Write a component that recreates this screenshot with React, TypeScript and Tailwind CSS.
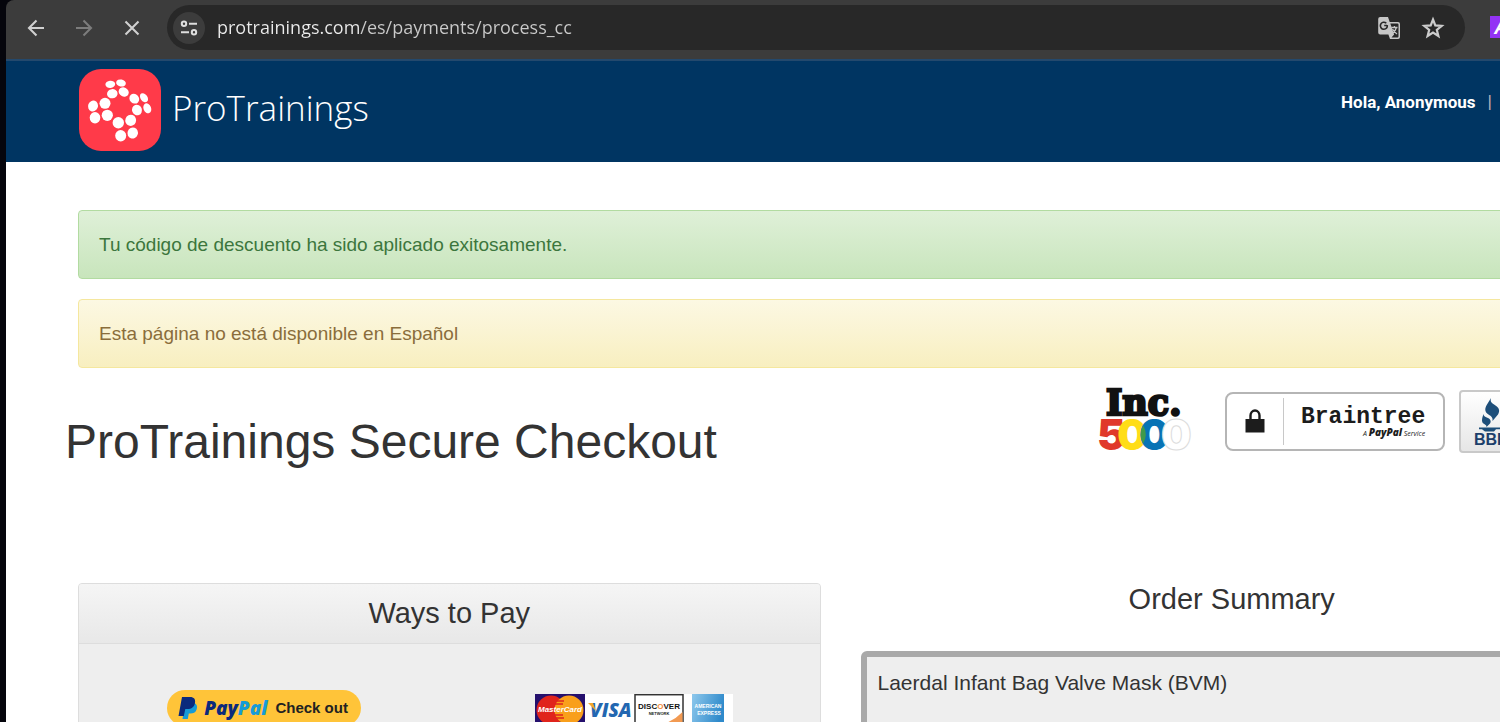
import React from "react";

const logoDots: [number, number, number, number, number][] = [
  [31.3, 15.3, 4.9, 3.6, -5],
  [42, 14, 4.9, 3.5, 12],
  [33.3, 24.7, 5.3, 4.6, -8],
  [44.7, 23, 5.2, 4.5, 25],
  [55.3, 29.7, 5.2, 4.6, 45],
  [65, 28.7, 3.5, 5, -35],
  [58, 41, 4.9, 5.4, -20],
  [68.3, 39.3, 3.8, 5.1, -22],
  [14, 37, 4.9, 5.5, 20],
  [26, 34.3, 5.5, 5.5, 0],
  [16, 48.7, 5.3, 5.7, 0],
  [28.3, 46.3, 5.6, 5.6, 0],
  [39.3, 53.7, 5.7, 5.7, 0],
  [51.7, 51.3, 5.4, 5.6, 20],
  [41.7, 66.7, 5.5, 5.7, 0],
  [53.7, 64, 5.2, 5.6, 20],
];

function BrandMark() {
  return (
    <svg viewBox="0 0 82 82" className="size-[82px] shrink-0" aria-hidden="true">
      <rect width="82" height="82" rx="22" fill="#ff3a49" />
      {logoDots.map(([x, y, rx, ry, a]) => (
        <ellipse key={`${x}-${y}`} cx={x} cy={y} rx={rx} ry={ry} fill="#fff" transform={`rotate(${a} ${x} ${y})`} />
      ))}
    </svg>
  );
}

function Toolbar() {
  return (
    <div className="flex h-[59px] items-start overflow-hidden rounded-tl-lg bg-[#3c3c3c] pt-[5px]">
      <div className="flex h-[45px] shrink-0 items-center gap-6 pr-[23px] pl-[18px]">
        <button type="button" aria-label="Back" className="text-[#d0d0d0]">
          <svg viewBox="0 0 24 24" className="size-6" fill="none" stroke="currentColor" strokeWidth="2.100">
            <path d="M20 12H5.500M12.500 4.500 5 12l7.500 7.500" />
          </svg>
        </button>
        <button type="button" aria-label="Forward" className="text-[#7c7c7c]">
          <svg viewBox="0 0 24 24" className="size-6" fill="none" stroke="currentColor" strokeWidth="2.100">
            <path d="M4 12h14.500M11.500 4.500l7.500 7.500-7.500 7.500" />
          </svg>
        </button>
        <button type="button" aria-label="Stop" className="text-[#d0d0d0]">
          <svg viewBox="0 0 24 24" className="size-6" fill="none" stroke="currentColor" strokeWidth="2.100">
            <path d="M5.500 5.500l13 13M18.500 5.500l-13 13" />
          </svg>
        </button>
      </div>
      <div className="flex h-[45px] min-w-0 flex-1 items-center rounded-full bg-[#282828] pr-5 pl-[6px]">
        <button type="button" aria-label="Site information" className="flex size-8 shrink-0 items-center justify-center rounded-full bg-[#3c3c3c]">
          <svg viewBox="0 0 18 18" className="size-[18px]" fill="none" stroke="#dedede" strokeWidth="2">
            <circle cx="4" cy="4.800" r="2.200" />
            <path d="M9 4.800h8M1 13.200h8" />
            <circle cx="14" cy="13.200" r="2.200" />
          </svg>
        </button>
        <input
          aria-label="Address"
          defaultValue="protrainings.com/es/payments/process_cc"
          className="ml-3 h-8 min-w-0 flex-1 bg-[linear-gradient(90deg,#ececec_143px,#cbcbcb_143px)] bg-clip-text pb-[2px] font-['Open_Sans','Noto_Sans',sans-serif] text-[18px] text-transparent outline-none"
        />
        <div className="flex items-center gap-5">
          <button type="button" aria-label="Translate">
            <svg viewBox="0 0 24 24" className="size-6">
              <path d="M3.200 1H11l1.700 5H21a2 2 0 0 1 2 2v13a2 2 0 0 1-2 2h-8l-1.600-4.500H3.200a2 2 0 0 1-2-2V3a2 2 0 0 1 2-2z" fill="#c6c6c6" />
              <path d="M13.300 7.500H20.500a1 1 0 0 1 1 1v12a1 1 0 0 1-1 1h-6l2.600-3z" fill="#282828" />
              <path d="M10 9.500H7.200M10.300 9.200c.3 2.200-1 4-3.400 4a3.500 3.500 0 1 1 2.400-6" fill="none" stroke="#282828" strokeWidth="1.600" />
              <path d="M14.200 11.500h6.300M17.400 10v1.500M19.400 11.500c-.6 2.500-2.200 4.500-4 6M15.500 13c1 2 2.500 3.800 4.500 5" fill="none" stroke="#c6c6c6" strokeWidth="1.300" />
            </svg>
          </button>
          <button type="button" aria-label="Bookmark this page">
            <svg viewBox="0 0 24 24" className="size-6" fill="none" stroke="#cccccc" strokeWidth="2.200">
              <path d="M12 3.500l2.300 5.900 6.400.4-4.900 4 1.600 6.200L12 16.600 6.600 20l1.600-6.200-4.900-4 6.400-.4z" />
            </svg>
          </button>
        </div>
      </div>
      <button type="button" aria-label="Extension" className="mt-[11px] ml-[25px] h-[22px] w-[10px] shrink-0 overflow-hidden bg-[#9333f5] pl-1 text-left font-['Liberation_Sans',sans-serif] text-xl leading-[22px] font-bold text-white italic">
        A
      </button>
    </div>
  );
}

function IncBadge() {
  return (
    <svg viewBox="0 0 94 66" className="h-[66px] w-[94px] shrink-0 overflow-visible" role="img" aria-label="Inc. 5000">
      <text x="7" y="27" fontSize="35" fill="#111" stroke="#111" strokeWidth="2.600" fontFamily="'DejaVu Serif', serif" fontWeight="bold">Inc.</text>
      <text y="62" fontSize="43" fontFamily="Inter, sans-serif" fontWeight="900">
        <tspan x="-2" fill="#e0392b">5</tspan>
        <tspan x="18" fill="#ffdd17">0</tspan>
        <tspan x="40" fill="#0873b5">0</tspan>
        <tspan x="62" fill="#fff" stroke="#dcdcdc">0</tspan>
      </text>
      <path d="M44 37q5.500 9.500 0 19-5-9.500 0-19z" fill="#3f9a4a" />
    </svg>
  );
}

function Braintree() {
  return (
    <a href="#braintree" className="flex h-[59px] w-[220px] shrink-0 items-center rounded-lg border-2 border-[#b5b5b5] bg-white">
      <span className="flex h-[47px] w-[57px] items-center justify-center border-r border-[#c8c8c8]">
        <svg viewBox="0 0 20 24" className="h-6 w-5" aria-hidden="true">
          <path d="M5.500 11V6.500a4.500 5 0 0 1 9 0V11" fill="none" stroke="#1c1c1c" strokeWidth="2.400" />
          <rect x="0.500" y="10" width="19" height="13.500" fill="#1c1c1c" />
        </svg>
      </span>
      <span className="ml-[17px] flex flex-col items-end pt-1 text-[#1c1c1c]">
        <span className="font-['Liberation_Mono',monospace] text-[23px] leading-5 font-bold">Braintree</span>
        <span className="font-['Open_Sans',sans-serif] text-[7px] leading-[10px] italic">
          A <b className="text-[10px] font-extrabold">PayPal</b> Service
        </span>
      </span>
    </a>
  );
}

function Bbb() {
  return (
    <a href="#bbb" className="flex h-[63px] w-[120px] shrink-0 flex-col rounded border-2 border-[#c9c9c9] bg-linear-to-b from-white to-[#e6e6e6] pt-[6px] pl-[13px]">
      <svg viewBox="0 0 32 34" className="h-[34px] w-8 shrink-0" aria-hidden="true" fill="#1d4e79">
        <path d="M17 0c-1 4 .5 5 4.500 7.500 4 2.500 4.500 5.500 2.500 9L18.500 23c.5-3.500-1-4.500-4-6.500-4-2.500-4-6-1.500-10z" />
        <path d="M9.500 16c0 2.500 2 3 4.500 4s3.500 3.500 2 5.500L12.500 29c.3-2-1.500-2.500-3-3.500-2-1.500-2-4 0-9.500z" />
        <path d="M5 29.500h22v1.800H5zM8 31.300h14l-2 2.200h-9z" />
      </svg>
      <span className="font-['Liberation_Sans',sans-serif] text-base leading-[15px] font-bold text-[#1d3f6b]">BBB</span>
    </a>
  );
}

function PayPalButton() {
  return (
    <button type="button" className="flex h-[36px] w-[194px] items-center rounded-full bg-[#ffc439] pl-[11px]">
      <svg viewBox="0 0 20 24" className="h-6 w-5" aria-hidden="true">
        <path d="M7 7h9c3 1 3.600 3.600 2.600 6.500-1 3-3.300 4-6.300 4h-1.500L9.800 23H4.500z" fill="#169bd7" />
        <path d="M4 1h8c4 0 5.700 2.300 5 6-.9 4-3.500 6-7.500 6H7.300L5.800 20H.500z" fill="#0b2a7c" />
      </svg>
      <span className="ml-[6px] font-['Open_Sans',sans-serif] text-[19px] leading-6 font-extrabold text-[#0b2a7c] italic">
        Pay<span className="text-[#169bd7]">Pal</span>
      </span>
      <span className="ml-2 font-['Liberation_Sans',sans-serif] text-[15px] leading-5 font-bold text-[#222]">Check out</span>
    </button>
  );
}

function AcceptedCards() {
  return (
    <svg viewBox="0 0 198 32" className="mt-1 h-8 w-[198px]" role="img" aria-label="Accepted cards">
      <rect width="198" height="32" fill="#fff" />
      <rect width="50" height="32" fill="#25106d" />
      <circle cx="16" cy="16" r="14.500" fill="#e0241c" />
      <circle cx="34" cy="16" r="14.500" fill="#f99f1b" />
      <path d="M21 7h8M20 10h8M20 21h8M21 24h8" stroke="#e0241c" strokeWidth="1.500" />
      <text x="25" y="18" fontSize="8" textAnchor="middle" fill="#fff" fontFamily="'Liberation Sans', sans-serif" fontWeight="bold" fontStyle="italic">MasterCard</text>
      <text x="55" y="23" fontSize="19" fill="#2367b1" fontFamily="'Open Sans', sans-serif" fontWeight="800" fontStyle="italic">VISA</text>
      <path d="M53 9h5l3 8z" fill="#f3a62c" />
      <rect x="100" y="0.700" width="48" height="34" fill="#fff" stroke="#333" strokeWidth="1.500" />
      <path d="M147.500 18v14H122q16-4 25.500-14z" fill="#f29a52" />
      <text x="124" y="15" fontSize="8" textAnchor="middle" fill="#111" fontFamily="'Liberation Sans', sans-serif" fontWeight="bold">
        DISC<tspan fill="#f58a3c">O</tspan>VER
      </text>
      <text x="124" y="21" fontSize="4" textAnchor="middle" fill="#222" fontFamily="'Liberation Sans', sans-serif" fontWeight="bold">NETWORK</text>
      <defs>
        <linearGradient id="amex" x1="0" y1="0" x2="1" y2="0.300">
          <stop offset="0" stopColor="#8ec8ec" />
          <stop offset="1" stopColor="#2f8acb" />
        </linearGradient>
      </defs>
      <rect x="157" width="32" height="32" fill="url(#amex)" />
      <text x="173" y="14" fontSize="5" textAnchor="middle" fill="#fff" fontFamily="'Liberation Sans', sans-serif" fontWeight="bold">AMERICAN</text>
      <text x="174" y="21" fontSize="5" textAnchor="middle" fill="#fff" fontFamily="'Liberation Sans', sans-serif" fontWeight="bold">EXPRESS</text>
    </svg>
  );
}

export default function App() {
  return (
    <div className="h-screen overflow-hidden bg-[#05050c] pl-[6px] font-['Liberation_Sans',Arial,sans-serif] text-[#333]">
      <Toolbar />
      <div className="min-h-full bg-white">
        <header className="flex h-[103px] items-center justify-between border-t-2 border-[#24496d] bg-[#003562] pr-2 pb-[3px] pl-[73px]">
          <a href="#home" className="flex items-center gap-[11px] text-white">
            <BrandMark />
            <span className="pb-[5px] font-['Open_Sans',sans-serif] text-[35px] leading-10 font-light">ProTrainings</span>
          </a>
          <div className="mb-4 flex gap-3 text-[17px] leading-6 text-white">
            <a href="#account" className="font-['Roboto',sans-serif] font-bold">Hola, Anonymous</a>
            <span className="text-[#b9aeb9]">|</span>
          </div>
        </header>
        <main className="-mr-[103px] pt-12 pl-[72px]">
          <div role="status" className="mb-5 rounded border border-[#b2dba1] bg-linear-to-b from-[#dff0d8] to-[#c8e5bc] px-5 py-5 text-[19px] leading-[27px] text-[#3c763d]">
            Tu código de descuento ha sido aplicado exitosamente.
          </div>
          <div role="status" className="rounded border border-[#f5e79e] bg-linear-to-b from-[#fcf8e3] to-[#f8efc0] px-5 py-5 text-[19px] leading-[27px] text-[#8a6d3b]">
            Esta página no está disponible en Español
          </div>
          <div className="mt-5 mr-[24px] -ml-[13px] flex items-start justify-between">
            <h1 className="mt-[26px] text-5xl leading-[56px]">ProTrainings Secure Checkout</h1>
            <div className="flex items-center">
              <IncBadge />
              <div className="ml-8"><Braintree /></div>
              <div className="ml-[14px]"><Bbb /></div>
            </div>
          </div>
          <div className="mt-[113px] grid grid-cols-2 gap-10">
            <section className="overflow-hidden rounded border border-[#ddd] bg-[#eee]">
              <h2 className="border-b border-[#ddd] bg-linear-to-b from-[#f5f5f5] to-[#e8e8e8] pt-[10px] pb-[10px] text-center text-[29px] leading-[39px]">Ways to Pay</h2>
              <div className="grid grid-cols-2 justify-items-center pt-[46px] pb-10">
                <PayPalButton />
                <AcceptedCards />
              </div>
            </section>
            <section>
              <h2 className="text-center text-[29px] leading-[32px]">Order Summary</h2>
              <div className="mt-9 rounded-md border-[6px] border-[#a9a9a9] bg-[#eee] px-[11px] pt-3 pb-12 text-[21px] leading-7">
                Laerdal Infant Bag Valve Mask (BVM)
              </div>
            </section>
          </div>
        </main>
      </div>
    </div>
  );
}
